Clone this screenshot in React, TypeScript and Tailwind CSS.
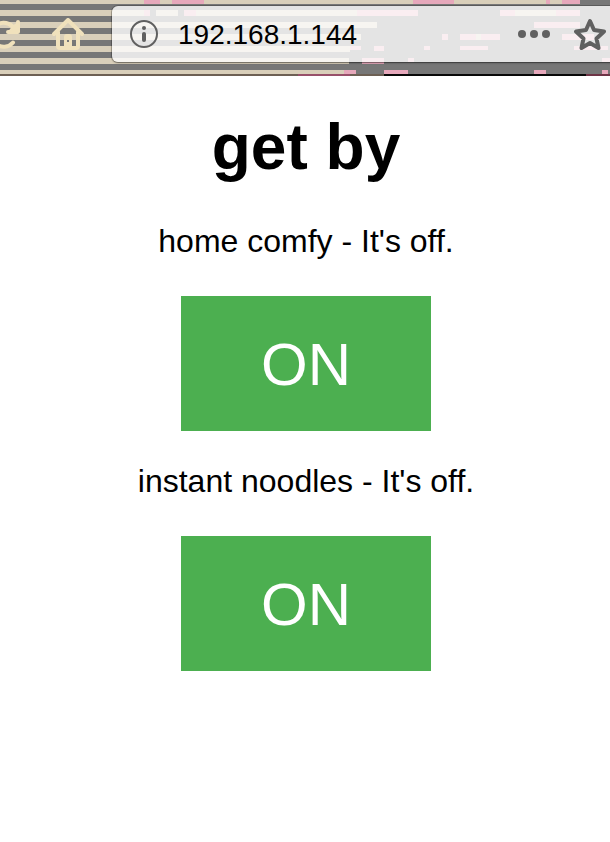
import { useState } from 'react';

type Dash = [x: number, y: number, width: number, height: number, color: string];

const PINK = '#e6a8bb';
const SAND = '#d9cfba';
const DARK = '#777777';

const dashes: Dash[] = [
  [0, 0, 580, 4, SAND],
  [144, 0, 16, 4, PINK],
  [172, 0, 32, 4, PINK],
  [413, 0, 41, 4, PINK],
  [546, 0, 4, 4, PINK],
  [562, 0, 18, 4, PINK],
  [0, 10, 365, 6, SAND],
  [144, 10, 6, 6, PINK],
  [150, 10, 6, 6, DARK],
  [178, 10, 6, 6, DARK],
  [184, 10, 12, 6, PINK],
  [357, 10, 61, 6, PINK],
  [500, 10, 80, 6, PINK],
  [515, 10, 41, 6, SAND],
  [0, 22, 377, 6, SAND],
  [534, 22, 46, 6, PINK],
  [0, 34, 361, 6, SAND],
  [442, 34, 6, 6, PINK],
  [460, 34, 40, 6, PINK],
  [476, 34, 5, 6, SAND],
  [562, 34, 32, 6, PINK],
  [0, 46, 350, 6, SAND],
  [350, 46, 11, 4, PINK],
  [374, 46, 10, 5, PINK],
  [424, 46, 6, 4, PINK],
  [460, 46, 28, 4, PINK],
  [574, 46, 34, 4, PINK],
  [0, 58, 349, 6, SAND],
  [362, 58, 22, 6, PINK],
  [408, 58, 6, 4, PINK],
  [602, 58, 8, 4, PINK],
  [0, 70, 356, 4, SAND],
  [344, 70, 12, 4, PINK],
  [384, 70, 24, 4, PINK],
  [534, 70, 12, 4, PINK],
  [602, 70, 6, 4, PINK],
  [0, 74, 384, 2, '#6d6054'],
  [298, 74, 52, 2, '#98506a'],
  [384, 74, 202, 2, '#080808'],
  [586, 74, 24, 2, '#6e3446'],
];

function ToolbarArt() {
  return (
    <svg
      aria-hidden="true"
      className="absolute inset-0 h-full w-full"
      viewBox="0 0 610 76"
      preserveAspectRatio="none"
    >
      <rect width="610" height="76" fill={DARK} />
      {dashes.map(([x, y, width, height, color], i) => (
        <rect key={i} x={x} y={y} width={width} height={height} fill={color} />
      ))}
    </svg>
  );
}

function ReloadIcon() {
  return (
    <svg width="32" height="32" viewBox="0 0 32 32" fill="none" aria-hidden="true">
      <path d="M24 8 30 4v10H20z" fill="#f0e1bc" />
      <path
        d="M25 24.5A12 12 0 1 1 24 8l5 5M30 4v10H20"
        stroke="#f0e1bc"
        strokeWidth="4"
        strokeLinecap="round"
        strokeLinejoin="round"
      />
    </svg>
  );
}

function HomeIcon() {
  return (
    <svg width="32" height="32" viewBox="0 0 32 32" fill="none" aria-hidden="true">
      <g stroke="#f0e1bc" strokeWidth="4" strokeLinecap="round" strokeLinejoin="round">
        <path d="M2 16 16 2l14 14" />
        <path d="M6 14v14q0 2 2 2h16q2 0 2-2V14" />
      </g>
      <path
        fillRule="evenodd"
        d="M12 30V19q0-3 3-3h2q3 0 3 3v11zm3-8v2h2v-2z"
        fill="#f0e1bc"
      />
    </svg>
  );
}

function InfoIcon() {
  return (
    <svg width="28" height="28" viewBox="0 0 28 28" fill="none" aria-hidden="true">
      <circle cx="14" cy="14" r="13" stroke="#606060" strokeWidth="2" />
      <circle cx="14" cy="8" r="2" fill="#606060" />
      <path d="M14 14v6" stroke="#606060" strokeWidth="4" strokeLinecap="round" />
    </svg>
  );
}

function DotsIcon() {
  return (
    <svg width="32" height="8" viewBox="0 0 32 8" fill="#606060" aria-hidden="true">
      <circle cx="4" cy="4" r="4" />
      <circle cx="16" cy="4" r="4" />
      <circle cx="28" cy="4" r="4" />
    </svg>
  );
}

function StarIcon() {
  return (
    <svg width="32" height="32" viewBox="0 0 32 32" fill="none" aria-hidden="true">
      <path
        d="M16 3l4 9 10 1.5-7.5 7 2 9.5-8.5-5-8.5 5 2-9.5L2 13.5 12 12z"
        stroke="#606060"
        strokeWidth="4"
        strokeLinejoin="round"
      />
    </svg>
  );
}

function BrowserBar() {
  const [address, setAddress] = useState('192.168.1.144');
  return (
    <header className="relative h-[76px] overflow-hidden">
      <ToolbarArt />
      <div className="relative flex h-[68px] items-center">
        <button type="button" aria-label="Reload" className="-ml-3 shrink-0">
          <ReloadIcon />
        </button>
        <button type="button" aria-label="Home" className="ml-8 shrink-0">
          <HomeIcon />
        </button>
        <form
          className="-mr-2 ml-7 flex h-14 min-w-0 flex-1 items-center rounded-md bg-white/80 pr-3 pl-[18px] shadow-[0_0_0_1px_#00000038,0_1px_2px_#00000060]"
          onSubmit={(e) => e.preventDefault()}
        >
          <button type="button" aria-label="Site information" className="shrink-0">
            <InfoIcon />
          </button>
          <input
            type="text"
            aria-label="Address"
            value={address}
            onChange={(e) => setAddress(e.target.value)}
            className="ml-5 h-[42px] min-w-0 flex-1 bg-transparent pt-[2px] text-[28px] leading-10 text-black outline-none"
          />
          <button type="button" aria-label="Page actions" className="shrink-0">
            <DotsIcon />
          </button>
          <button type="button" aria-label="Bookmark this page" className="ml-6 shrink-0">
            <StarIcon />
          </button>
        </form>
      </div>
    </header>
  );
}

function Switch({ name }: { name: string }) {
  const [on, setOn] = useState(false);
  return (
    <section className="flex flex-col items-center">
      <p className="text-[32px] leading-9">
        {name} - It's {on ? 'on' : 'off'}.
      </p>
      <button
        type="button"
        aria-label={`${on ? 'OFF' : 'ON'} ${name}`}
        onClick={() => setOn(!on)}
        className="mt-[37px] cursor-pointer bg-[#4caf50] px-20 pt-[33px] pb-[31px] text-[60px] leading-[71px] text-white"
      >
        {on ? 'OFF' : 'ON'}
      </button>
    </section>
  );
}

export default function App() {
  return (
    <div className="min-h-screen bg-white font-['Liberation_Sans',Arial,sans-serif] text-black">
      <BrowserBar />
      <main className="pt-[35px] pr-4 pl-[18px] text-center">
        <h1 className="text-[64px] leading-[72px] font-bold">get by</h1>
        <div className="mt-10 flex flex-col gap-8">
          <Switch name="home comfy" />
          <Switch name="instant noodles" />
        </div>
      </main>
    </div>
  );
}
